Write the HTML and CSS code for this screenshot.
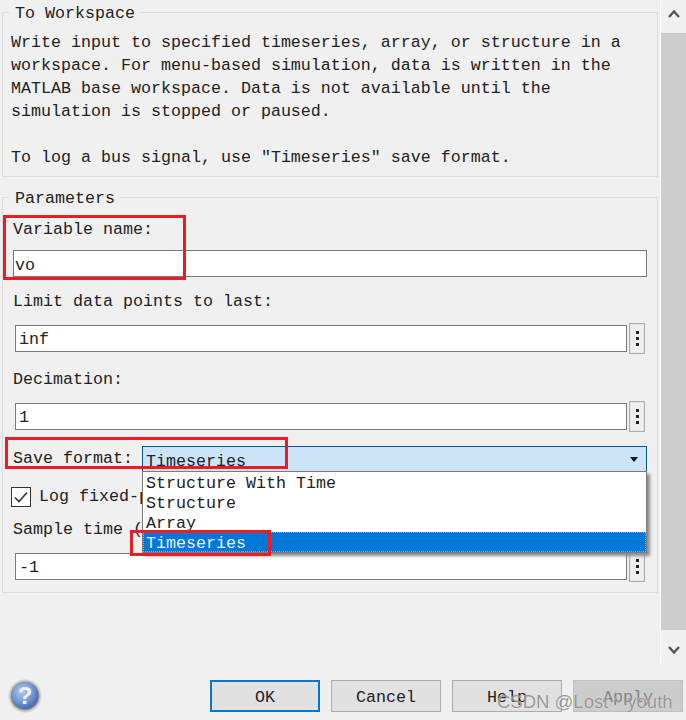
FILE: index.html
```html
<html>
<head>
    <meta charset="UTF-8" />
    <meta name="viewport" content="width=device-width, initial-scale=1.0" />
    <title>Block Parameters: To Workspace</title>
    <link rel="stylesheet" href="styles.css">
</head>
<body>
    <div class="dialog">
        <div class="top">
            <div class="panes">
                <div class="group info">
                    <div class="legend">To Workspace</div>
                    <p class="desc">Write input to specified timeseries, array, or structure in a
workspace. For menu-based simulation, data is written in the
MATLAB base workspace. Data is not available until the
simulation is stopped or paused.

To log a bus signal, use "Timeseries" save format.</p>
                </div>

                <div class="group params">
                    <div class="legend">Parameters</div>

                    <div class="label first">Variable name:</div>
                    <input class="field wide" value="vo">

                    <div class="label near">Limit data points to last:</div>
                    <div class="field-row">
                        <input class="field" value="inf">
                        <button class="dots"><i></i><i></i><i></i></button>
                    </div>

                    <div class="label">Decimation:</div>
                    <div class="field-row">
                        <input class="field" value="1">
                        <button class="dots"><i></i><i></i><i></i></button>
                    </div>

                    <div class="save-row">
                        <span class="save-label">Save format:</span>
                        <div class="select">
                            <span>Timeseries</span>
                            <span class="caret"></span>
                            <ul class="options">
                                <li>Structure With Time</li>
                                <li>Structure</li>
                                <li>Array</li>
                                <li class="selected">Timeseries</li>
                            </ul>
                        </div>
                    </div>

                    <div class="check-row">
                        <span class="checkbox">
                            <svg width="14" height="12" viewBox="0 0 14 12"><path d="M1 6.5 L5 10.5 L13 1.5" fill="none" stroke="#333" stroke-width="1.6"/></svg>
                        </span>
                        <span>Log fixed-p</span>
                    </div>

                    <div class="label sample">Sample time (</div>
                    <div class="field-row">
                        <input class="field" value="-1">
                        <button class="dots"><i></i><i></i><i></i></button>
                    </div>
                </div>
            </div>

            <div class="scrollbar">
                <svg class="arrow" width="12" height="10" viewBox="0 0 12 10"><path d="M1 8 L6 2.5 L11 8" fill="none" stroke="#555" stroke-width="2.4"/></svg>
                <div class="thumb"></div>
                <svg class="arrow" width="12" height="10" viewBox="0 0 12 10"><path d="M1 2 L6 7.5 L11 2" fill="none" stroke="#555" stroke-width="2.4"/></svg>
            </div>
        </div>

        <div class="footer">
            <svg class="help-icon" width="34" height="34" viewBox="0 0 34 34">
                <defs>
                    <radialGradient id="ball" cx="40%" cy="35%" r="70%">
                        <stop offset="0" stop-color="#b4c8ea"/>
                        <stop offset="0.6" stop-color="#7094d0"/>
                        <stop offset="1" stop-color="#3f62a8"/>
                    </radialGradient>
                </defs>
                <circle cx="17" cy="17" r="16.5" fill="#d0d0d0"/>
                <circle cx="17" cy="17" r="14.5" fill="#8f8f98"/>
                <circle cx="17" cy="16.5" r="13.5" fill="url(#ball)"/>
                <text x="17" y="25" text-anchor="middle" class="help-mark">?</text>
            </svg>
            <div class="buttons">
                <button class="btn default">OK</button>
                <button class="btn">Cancel</button>
                <button class="btn">Help</button>
                <button class="btn disabled">Apply</button>
            </div>
        </div>

        <!-- red annotations drawn on top of the screenshot -->
        <div class="mark mark-name"></div>
        <div class="mark mark-save"></div>
        <div class="mark mark-item"></div>
        <div class="watermark">CSDN @Lost丶youth</div>
    </div>
</body>
</html>
```

FILE: styles.css
```css
* {
    box-sizing: border-box;
}
body {
    margin: 0;
    background: #f0f0f0;
}
.dialog {
    position: relative;
    width: 686px;
    height: 720px;
    overflow: hidden;
    font-family: "Liberation Mono", monospace;
    font-size: 16.66px;
    line-height: 23px;
    color: #222;
}
.top {
    display: flex;
    height: 663px;
}
.panes {
    width: 660px;
    padding: 12px 2px 0 2px;
}
.group {
    position: relative;
    border: 1px solid #dcdcdc;
}
.legend {
    position: absolute;
    top: -11px;
    left: 6px;
    padding: 0 5px 0 6px;
    background: #f0f0f0;
}
.info {
    height: 165px;
    padding: 18px 8px 0 8px;
}
.desc {
    margin: 0;
    white-space: pre;
}
.params {
    height: 396px;
    margin-top: 20px;
    padding: 20px 10px 0 10px;
}
.label {
    height: 23px;
    margin-top: 16px;
    margin-bottom: 12px;
}
.label.first {
    margin-top: 0;
    margin-bottom: 9px;
}
.label.near {
    margin-top: 13px;
}
.field {
    flex: 1;
    height: 27px;
    padding: 2px 3px 0 3px;
    border: 1px solid #7a7a7a;
    border-radius: 0;
    outline: none;
    background: #fff;
    font: inherit;
    color: inherit;
}
.wide {
    display: block;
    width: 634px;
    padding: 4px 1px 0 1px;
}
.field-row {
    display: flex;
    align-items: center;
    gap: 2px;
    width: 630px;
    height: 27px;
    margin-left: 2px;
}
.dots {
    display: flex;
    flex-direction: column;
    align-items: center;
    justify-content: center;
    gap: 3px;
    flex: none;
    width: 16px;
    height: 31px;
    padding: 0;
    border: 1px solid #adadad;
    box-shadow: inset 0 0 0 1px #e6e6e6;
    background: #f0f0f0;
}
.dots i {
    width: 3px;
    height: 3px;
    background: #222;
}
.save-row {
    display: flex;
    align-items: center;
    height: 26px;
    margin-top: 16px;
}
.save-label {
    width: 129px;
    flex: none;
    padding-bottom: 2px;
}
.select {
    position: relative;
    display: flex;
    align-items: center;
    justify-content: space-between;
    width: 505px;
    height: 26px;
    padding: 5px 8px 0 3px;
    border: 1px solid #005499;
    border-bottom-color: #6d8aa5;
    background: #cce4f7;
}
.caret {
    width: 0;
    height: 0;
    margin-top: -5px;
    border-left: 4px solid transparent;
    border-right: 4px solid transparent;
    border-top: 5px solid #111;
}
.options {
    position: absolute;
    z-index: 2;
    top: 24px;
    left: -1px;
    width: 505px;
    height: 82px;
    margin: 0;
    padding: 0;
    list-style: none;
    border: 1px solid #7a7a7a;
    background: #fff;
    box-shadow: 3px 3px 3px #8a8a8a;
}
.options li {
    height: 20px;
    padding-left: 3px;
    line-height: 24px;
}
.options .selected {
    height: 20px;
    outline: 1px dotted #d99a4e;
    outline-offset: -1px;
    background: #0078d7;
    color: #e6f2fb;
}
.check-row {
    display: flex;
    align-items: center;
    gap: 8px;
    margin-top: 13px;
    margin-left: -2px;
    height: 23px;
    white-space: nowrap;
}
.checkbox {
    display: flex;
    align-items: center;
    justify-content: center;
    width: 20px;
    height: 20px;
    flex: none;
    border: 1px solid #333;
    background: #fff;
}
.label.sample {
    margin-top: 10px;
    margin-bottom: 12px;
    white-space: nowrap;
}
.scrollbar {
    display: flex;
    flex-direction: column;
    align-items: center;
    justify-content: space-between;
    width: 26px;
    height: 663px;
    border-left: 1px solid #fff;
    background: #f0f0f0;
}
.arrow {
    flex: none;
    margin: 9px 0 8px 0;
}
.thumb {
    width: 100%;
    height: 597px;
    background: #cdcdcd;
}
.footer {
    display: flex;
    align-items: flex-start;
    justify-content: space-between;
    height: 57px;
    padding: 17px 3px 0 8px;
}
.help-icon {
    flex: none;
    margin-top: -1px;
}
.help-mark {
    font-family: "Liberation Sans", sans-serif;
    font-size: 24px;
    font-weight: bold;
    fill: #eef2fa;
}
.buttons {
    display: flex;
    gap: 11px;
}
.btn {
    width: 110px;
    height: 32px;
    padding: 2px 0 0 0;
    border: 1px solid #adadad;
    background: #e1e1e1;
    font: inherit;
    color: #222;
}
.btn.default {
    border: 2px solid #0078d7;
}
.btn.disabled {
    border-color: #bfbfbf;
    background: #cccccc;
    color: #838383;
}
.mark {
    position: absolute;
    border: 3px solid #ed1c24;
    z-index: 3;
}
.mark-name {
    left: 3px;
    top: 215px;
    width: 183px;
    height: 65px;
}
.mark-save {
    left: 5px;
    top: 437px;
    width: 283px;
    height: 32px;
}
.mark-item {
    left: 130px;
    top: 530px;
    width: 141px;
    height: 26px;
}
.watermark {
    position: absolute;
    z-index: 4;
    left: 497px;
    top: 690px;
    font-family: "Liberation Sans", sans-serif;
    font-size: 18.5px;
    color: rgba(120, 120, 120, 0.75);
    text-shadow: 0 0 1px rgba(255, 255, 255, 0.8);
    white-space: nowrap;
}
```
